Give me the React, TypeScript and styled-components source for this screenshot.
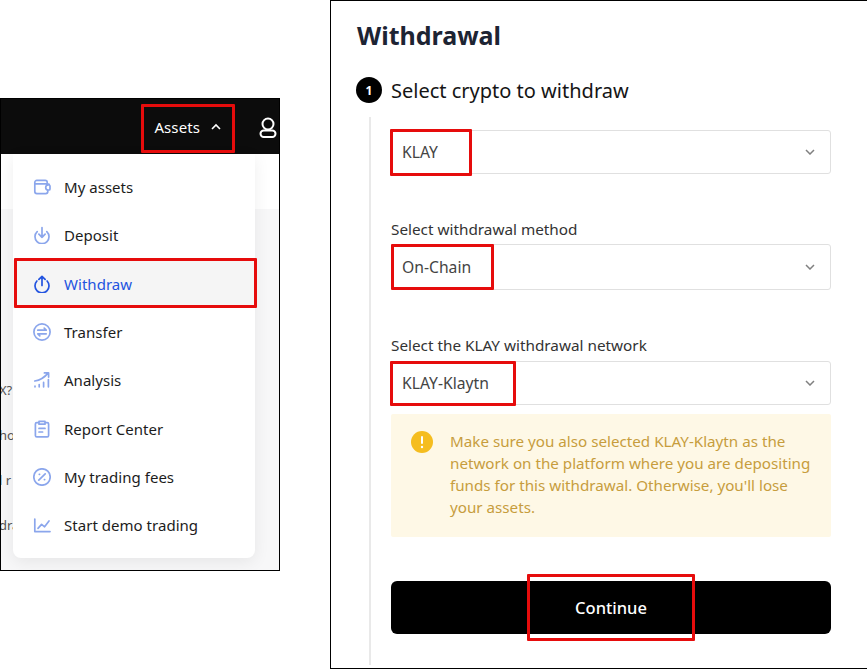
import React from "react";
import styled, { createGlobalStyle } from "styled-components";

const GlobalStyle = createGlobalStyle`
  html, body {
    margin: 0;
    padding: 0;
    background: #fff;
  }
  * {
    box-sizing: border-box;
  }
`;

const Page = styled.div`
  width: 867px;
  height: 669px;
  display: flex;
  align-items: flex-start;
  gap: 50px;
  font-family: "Noto Sans", sans-serif;
  color: #1c1c1c;
  overflow: hidden;
`;

const MenuShot = styled.section`
  position: relative;
  width: 280px;
  height: 473px;
  margin-top: 98px;
  border: 1px solid #000;
  background: #f7f7f8;
  overflow: hidden;
`;

const TopBar = styled.header`
  height: 55px;
  background: #0c0c0c;
  display: flex;
  align-items: center;
  justify-content: flex-end;
  color: #fff;
  font-size: 15px;
`;

const AssetsLabel = styled.span`
  margin-right: 10px;
  letter-spacing: 0.1px;
`;

const Caret = styled.svg`
  width: 12px;
  height: 8px;
  margin-right: 36px;
`;

const UserIcon = styled.svg`
  width: 20px;
  height: 24px;
  margin-right: 1px;
`;

const BehindText = styled.div`
  position: absolute;
  left: -2px;
  top: 283px;
  white-space: nowrap;
  font-size: 13px;
  color: #555;
  display: flex;
  flex-direction: column;
  gap: 29px;
  line-height: 16px;
`;

const WhiteBand = styled.div`
  position: absolute;
  left: 0;
  right: 0;
  top: 55px;
  height: 55px;
  background: #fff;
`;

const Menu = styled.nav`
  position: absolute;
  left: 12px;
  top: 55px;
  width: 242px;
  height: 404px;
  background: #fff;
  border-radius: 0 0 8px 8px;
  box-shadow: 0 4px 16px rgba(0, 0, 0, 0.07);
  padding-top: 9px;
`;

const MenuRow = styled.div<{ $active?: boolean }>`
  height: 48.3px;
  display: flex;
  align-items: center;
  gap: 13px;
  padding-left: 20px;
  font-size: 15px;
  letter-spacing: 0.03px;
  color: ${(p) => (p.$active ? "#2354e0" : "#1c1c1c")};
  background: ${(p) => (p.$active ? "#f5f5f5" : "transparent")};
`;

const MenuIcon = styled.svg`
  width: 18px;
  height: 18px;
  flex: none;
  fill: none;
  stroke: currentColor;
  stroke-width: 1.7;
  stroke-linecap: round;
  stroke-linejoin: round;
`;

const IconTint = styled.span<{ $active?: boolean }>`
  display: flex;
  color: ${(p) => (p.$active ? "#2354e0" : "#8ba6ec")};
`;

const Highlight = styled.div<{ $x: number; $y: number; $w: number; $h: number }>`
  position: absolute;
  left: ${(p) => p.$x}px;
  top: ${(p) => p.$y}px;
  width: ${(p) => p.$w}px;
  height: ${(p) => p.$h}px;
  border: 3px solid #e60c0c;
  border-radius: 1px;
  pointer-events: none;
`;

const FormShot = styled.section`
  position: relative;
  width: 537px;
  height: 669px;
  border: 1px solid #000;
  border-right: none;
  background: #fff;
  padding: 16px 36px 0 25px;
`;

const Title = styled.h1`
  margin: 0 0 0 1px;
  font-size: 25px;
  line-height: 36px;
  font-weight: 700;
  color: #1d2433;
`;

const StepHead = styled.div`
  display: flex;
  align-items: center;
  gap: 9px;
  margin-top: 23px;
  height: 28px;
  font-size: 20px;
  color: #151515;
`;

const StepNum = styled.span`
  width: 26px;
  height: 26px;
  border-radius: 50%;
  background: #000;
  color: #fff;
  display: flex;
  align-items: center;
  justify-content: center;
  font-size: 12px;
  font-weight: 700;
`;

const StepBody = styled.div`
  margin: 13px 0 0 13px;
  padding: 13px 0 0 20px;
  border-left: 2px solid #e9e9e9;
  height: 548px;
`;

const FieldLabel = styled.div<{ $top: number }>`
  margin-top: ${(p) => p.$top}px;
  font-size: 15.3px;
  line-height: 20px;
  color: #333;
`;

const Select = styled.div<{ $h: number; $top?: number }>`
  height: ${(p) => p.$h}px;
  margin-top: ${(p) => p.$top ?? 0}px;
  border: 1px solid #e0e0e0;
  border-radius: 3px;
  padding: 0 15px 0 10px;
  display: flex;
  align-items: center;
  justify-content: space-between;
  font-size: 15.7px;
  color: #444;
`;

const Chevron = styled.svg`
  width: 10px;
  height: 6px;
  fill: none;
  stroke: #808080;
  stroke-width: 1.5;
`;

const Notice = styled.div`
  margin-top: 9px;
  height: 123px;
  background: #fef8e6;
  border-radius: 2px;
  display: flex;
  gap: 17px;
  padding: 17px 14px 0 20px;
`;

const NoticeIcon = styled.svg`
  width: 22px;
  height: 22px;
  flex: none;
`;

const NoticeText = styled.p`
  margin: -1px 0 0;
  font-size: 15.2px;
  line-height: 22px;
  color: #c79d3d;
`;

const Continue = styled.button`
  display: block;
  width: 100%;
  height: 53px;
  margin-top: 44px;
  border: none;
  border-radius: 6px;
  background: #000;
  color: #fff;
  font: 500 16.5px "Noto Sans", sans-serif;
`;

const items = [
  {
    label: "My assets",
    d: "M1.8 5.2V4.4a2 2 0 0 1 2-2h8.4a2 2 0 0 1 2 2v1.4M1.8 5.2v8.4a2 2 0 0 0 2 2h9a2 2 0 0 0 2-2v-1.4M1.8 5.8h13a2 2 0 0 1 1.4.6M15.2 7h.8a1 1 0 0 1 1 1v3a1 1 0 0 1-1 1h-.8a2.5 2.5 0 0 1 0-5z",
  },
  { label: "Deposit", d: "M9 1.5v9.8M5.9 8.2L9 11.3l3.1-3.1M4.2 5.6a7 7 0 1 0 9.6 0" },
  { label: "Withdraw", d: "M9 10.5V1.3M5.9 4.4L9 1.3l3.1 3.1M3.9 6a7 7 0 1 0 10.2 0", active: true },
  { label: "Transfer", d: "M9 .9a8.1 8.1 0 1 0 0 16.2A8.1 8.1 0 0 0 9 .9zM4.8 7.2h8.4l-2-2M13.2 10.8H4.8l2 2" },
  { label: "Analysis", d: "M1.8 10c5-.8 9.6-3.4 13-7.6M11.4 1.9h4.2v4.2M2 15.8v-.6M6.2 15.8v-2.2M10.6 15.8v-4.4M15.4 15.8V8.6" },
  { label: "Report Center", d: "M6 2.6H3.8a1.4 1.4 0 0 0-1.4 1.4v11.4a1.4 1.4 0 0 0 1.4 1.4h10.4a1.4 1.4 0 0 0 1.4-1.4V4a1.4 1.4 0 0 0-1.4-1.4H12M6 1.4h6v2.8H6zM6 8.4h6M6 12h3.6" },
  { label: "My trading fees", d: "M9 .8a8.2 8.2 0 1 0 0 16.4A8.2 8.2 0 0 0 9 .8zM12.2 5.8l-6.4 6.4M6.3 6.3h.3M11.4 11.6h.3" },
  { label: "Start demo trading", d: "M1.8 3v12.6H17M5 12.4l3.6-4 3 2.4L16 5" },
];

const App = () => (
  <Page>
    <GlobalStyle />
    <MenuShot>
      <TopBar>
        <AssetsLabel>Assets</AssetsLabel>
        <Caret viewBox="0 0 12 8" fill="none" stroke="#fff" strokeWidth="1.6">
          <path d="M2 6l4-4 4 4" />
        </Caret>
        <UserIcon viewBox="0 0 20 24" fill="none" stroke="#fff" strokeWidth="2">
          <circle cx="10" cy="9" r="5.5" />
          <rect x="2.5" y="15.5" width="15" height="6.5" rx="3.2" />
        </UserIcon>
      </TopBar>
      <WhiteBand />
      <BehindText>
        <span>X?</span>
        <span>ho</span>
        <span>l r</span>
        <span>dra</span>
      </BehindText>
      <Menu>
        {items.map((item) => (
          <MenuRow key={item.label} $active={item.active}>
            <IconTint $active={item.active}>
              <MenuIcon viewBox="0 0 18 18">
                <path d={item.d} />
              </MenuIcon>
            </IconTint>
            {item.label}
          </MenuRow>
        ))}
      </Menu>
      <Highlight $x={140} $y={5} $w={94} $h={49} />
      <Highlight $x={13} $y={159} $w={243} $h={50} />
    </MenuShot>
    <FormShot>
      <Title>Withdrawal</Title>
      <StepHead>
        <StepNum>1</StepNum>
        Select crypto to withdraw
      </StepHead>
      <StepBody>
        <Select $h={44}>
          KLAY
          <Chevron viewBox="0 0 10 6"><path d="M1 1l4 4 4-4" /></Chevron>
        </Select>
        <FieldLabel $top={45}>Select withdrawal method</FieldLabel>
        <Select $h={46} $top={5}>
          On-Chain
          <Chevron viewBox="0 0 10 6"><path d="M1 1l4 4 4-4" /></Chevron>
        </Select>
        <FieldLabel $top={45}>Select the KLAY withdrawal network</FieldLabel>
        <Select $h={44} $top={6}>
          KLAY-Klaytn
          <Chevron viewBox="0 0 10 6"><path d="M1 1l4 4 4-4" /></Chevron>
        </Select>
        <Notice>
          <NoticeIcon viewBox="0 0 22 22">
            <circle cx="11" cy="11" r="11" fill="#f5bd1f" />
            <rect x="10" y="5" width="2" height="8" rx="1" fill="#fff" />
            <circle cx="11" cy="16" r="1.2" fill="#fff" />
          </NoticeIcon>
          <NoticeText>
            Make sure you also selected KLAY-Klaytn as the network on the platform where you are
            depositing funds for this withdrawal. Otherwise, you'll lose your assets.
          </NoticeText>
        </Notice>
        <Continue>Continue</Continue>
      </StepBody>
      <Highlight $x={59} $y={128} $w={82} $h={47} />
      <Highlight $x={60} $y={243} $w={103} $h={46} />
      <Highlight $x={59} $y={360} $w={126} $h={45} />
      <Highlight $x={196} $y={573} $w={168} $h={67} />
    </FormShot>
  </Page>
);

export default App;
